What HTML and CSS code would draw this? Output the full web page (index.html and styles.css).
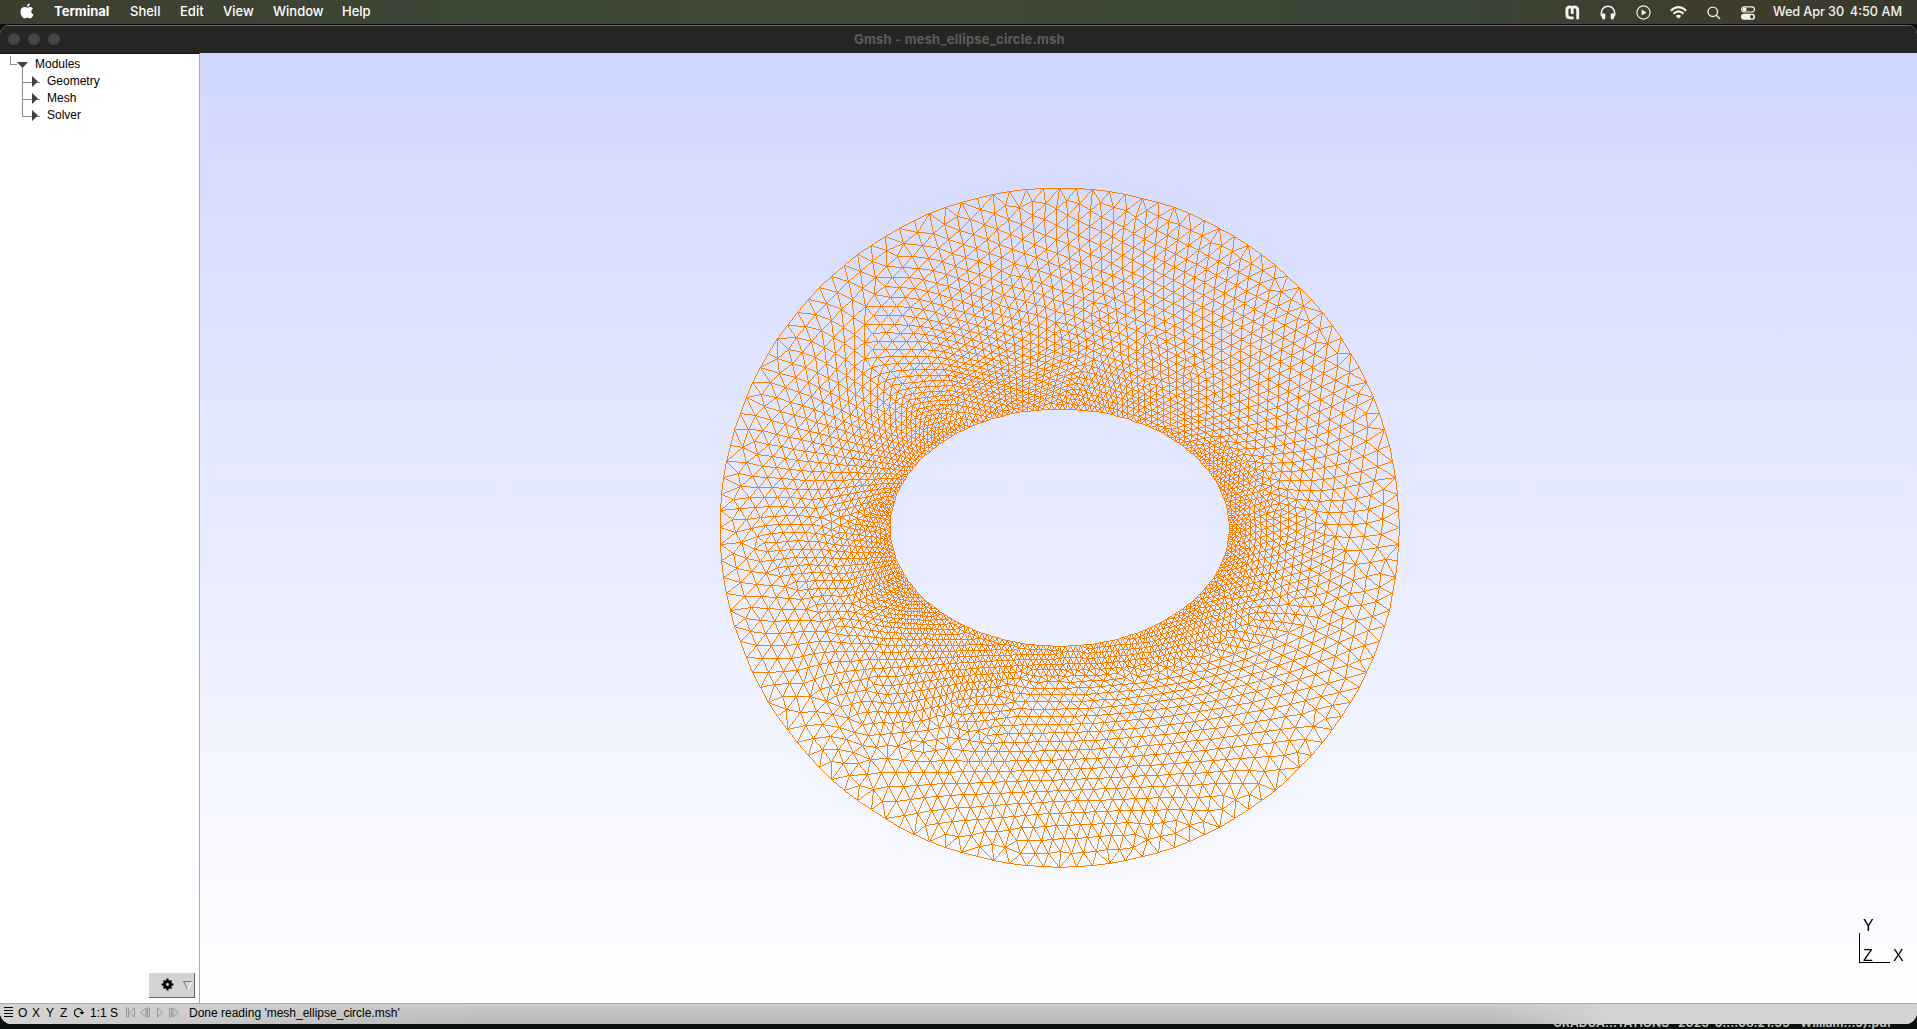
FILE: index.html
```html
<!DOCTYPE html>
<html lang="en">
<head>
<meta charset="utf-8">
<title>Gmsh - mesh_ellipse_circle.msh</title>
<link rel="stylesheet" href="styles.css">
</head>
<body>
<header class="menubar">
  <svg class="apple" viewBox="0 0 14 17" width="14" height="17"><path d="M9.900 0.400c.1 1.700-1.300 3.300-3 3.300C6.700 2.100 8.200.6 9.900.4zM7.100 4.700c.7 0 1.600-.8 3-.8 1.200 0 2.300.6 2.900 1.600-2.500 1.500-2.100 4.900.5 5.900-.6 1.700-2 4-3.400 4-1.100 0-1.500-.7-2.800-.7s-1.800.7-2.800.7C2.700 15.400.5 12 .5 8.700.5 5.600 2.500 4 4.300 4c1.200 0 2.100.7 2.800.7z" fill="#fff"/></svg>
  <nav class="menus"><b class="m1">Terminal</b><span class="m2">Shell</span><span class="m3">Edit</span><span class="m4">View</span><span class="m5">Window</span><span class="m6">Help</span></nav>
  <div class="status-icons">
    <svg width="15" height="15" viewBox="0 0 15 15" fill="none" stroke="#f1f1ee" stroke-width="2.900"><path d="M7.200 9V3.500Q7 1.900 5 1.900Q1.900 1.900 1.900 5V9.500Q1.900 12.900 5.200 12.900H8.600M7.200 4Q7.200 1.900 9.300 1.900Q12.700 1.900 12.700 5V14.200"/></svg>
    <svg width="16" height="16" viewBox="0 0 16 16"><path d="M1.700 11.500C.2 6 3 1.300 8 1.300s7.800 4.700 6.300 10.200" fill="none" stroke="#f1f1ee" stroke-width="1.500"/><rect x="2" y="8.300" width="3.300" height="6.200" rx="1.400" fill="#f1f1ee"/><rect x="10.700" y="8.300" width="3.300" height="6.200" rx="1.400" fill="#f1f1ee"/></svg>
    <svg width="15" height="15" viewBox="0 0 15 15"><circle cx="7.500" cy="7.500" r="6.600" fill="none" stroke="#f1f1ee" stroke-width="1.200"/><path d="M5.600 4.500v6l5-3z" fill="#f1f1ee"/></svg>
    <svg width="17" height="13" viewBox="0 0 17 13" fill="none" stroke="#f1f1ee" stroke-width="2.200"><path d="M.8 4.700Q8.500-2.300 16.200 4.700M3.500 7.700Q8.500 3.200 13.500 7.700"/><path d="M5.800 9.900Q8.500 7.800 11.200 9.900L8.500 12.700z" fill="#f1f1ee" stroke="none"/></svg>
    <svg width="14" height="14" viewBox="0 0 14 14" fill="none" stroke="#f1f1ee" stroke-width="1.400"><circle cx="5.800" cy="5.800" r="4.700"/><path d="M9.300 9.300L13 13"/></svg>
    <svg width="14" height="14" viewBox="0 0 14 14"><rect x=".6" y=".8" width="12.800" height="5.200" rx="2.600" fill="none" stroke="#f1f1ee" stroke-width="1.200"/><circle cx="3.600" cy="3.400" r="2" fill="#f1f1ee"/><rect x="0" y="7.700" width="14" height="6" rx="3" fill="#f1f1ee"/><circle cx="10.700" cy="10.700" r="1.700" fill="#3a3b2e"/></svg>
  </div>
  <div class="clock"><span class="date">Wed Apr 30</span><span class="time">4:50 AM</span></div>
</header>
<main class="window">
  <div class="titlebar"><div class="lights"><i></i><i></i><i></i></div><span class="title">Gmsh - mesh_ellipse_circle.msh</span></div>
  <div class="work">
    <aside class="sidebar">
      <div class="tree">
        <svg class="lines" width="60" height="70" viewBox="0 0 60 70"><g fill="none" stroke="#8b8b8b" shape-rendering="crispEdges"><path d="M10.500 2v8.500H17M22.500 14v48.500H33M23 28.500H40M23 45.500H40M33 62.500H40"/></g><path d="M17 8H28L22.500 14z M32 22v11l6-5.500z M32 39v11l6-5.500z M32 56v11l6-5.500z" fill="#404040"/></svg>
        <ul><li class="root">Modules</li><li>Geometry</li><li>Mesh</li><li>Solver</li></ul>
      </div>
      <div class="gear">
        <svg width="46" height="25" viewBox="0 0 46 25"><g fill="#000" transform="translate(18.500 11.500)"><circle r="4.500"/><path d="M-1-6H1V6H-1z M-6-1H6V1H-6z M-4.600-3.400L-3.400-4.600L4.600 3.400L3.400 4.600z M4.600-3.400L3.400-4.600L-4.600 3.400L-3.400 4.600z"/><circle r="1.400" fill="#d3d3d3"/></g><path d="M34.500 8.500H43M34.500 8.500L38.500 16.500" stroke="#777" fill="none"/><path d="M43 8.500L38.500 16.500" stroke="#fff"/></svg>
      </div>
    </aside>
    <section class="view">
      <canvas id="mesh" width="1717" height="950"></canvas>
      <svg class="axes" width="48" height="48" viewBox="0 0 48 48"><path d="M2.500 15V44.500H33" fill="none" stroke="#000" shape-rendering="crispEdges"/><text x="6" y="12.500">Y</text><text x="6" y="42.500">Z</text><text x="36" y="42.500">X</text></svg>
    </section>
  </div>
  <footer class="statusbar">
    <svg class="list" width="10" height="11" viewBox="0 0 10 11"><path d="M0 .5H9M0 3.500H9M0 6.500H9M0 9.500H9" stroke="#000" shape-rendering="crispEdges"/></svg>
    <span class="b">O</span><span class="b">X</span><span class="b">Y</span><span class="b">Z</span>
    <svg class="rot" width="10" height="11" viewBox="0 0 10 11"><path d="M5.500 9.500A4 4 0 1 1 8.300 5" fill="none" stroke="#000" stroke-width="1.100"/><path d="M5.500 5H10V6L7.500 7.500z"/></svg>
    <span class="one">1:1</span><span class="s">S</span>
    <svg class="play" width="54" height="11" viewBox="0 0 54 11" fill="none" stroke="#969696"><path d="M.5 1V10H2.500V1zM8.500 1L3.500 5.500L8.500 10zM20 1L14.500 5.500L20 10zM21.500 1V10H23.500V1zM31.500 1V10L36.500 5.500zM43.500 1V10H45.500V1zM47 1V10L52.500 5.500z"/></svg>
    <span class="msg">Done reading 'mesh_ellipse_circle.msh'</span>
  </footer>
</main>
<div class="desktop"><span class="d1">GRADUA...TATIONS</span><span class="d2">2025-0....08.21.55</span><span class="d3">William...9).pdf</span></div>
<script src="mesh.js"></script>
</body>
</html>
```
FILE: styles.css
```css
* { box-sizing: border-box; }
body { margin: 0; width: 1917px; height: 1029px; overflow: hidden; background: #0b100d; font-family: "Liberation Sans", sans-serif; display: flex; flex-direction: column; }
.menubar { flex: none; height: 24px; display: flex; align-items: center; padding: 0 0 1px 20px; background: linear-gradient(90deg, #3d3e30, #3c4736 25%, #414a35 45%, #394535 75%, #403d2d 90%, #39382c); color: #fff; font: 500 13px Inter, sans-serif; }
.apple { flex: none; margin-top: -1px; }
.menus { display: flex; padding-left: 20px; width: 1534px; white-space: nowrap; }
.menus b, .menus span { line-height: 23px; }
.m1 { width: 76px; font-weight: 700; }
.m2 { width: 50px; }
.m3 { width: 43px; }
.m4 { width: 50px; }
.m5 { width: 69px; }
.status-icons { display: flex; align-items: center; justify-content: space-between; width: 190px; flex: none; margin: 2px 0 0 -3px; }
.clock { display: flex; justify-content: space-between; width: 129px; margin-left: 18px; white-space: nowrap; color: #f3f3f0; font-size: 12.700px; flex: none; }
.date { letter-spacing: -.1px; }
.window { flex: none; height: 999px; border-radius: 9px 9px 12px 12px; overflow: hidden; display: flex; flex-direction: column; background: #fff; margin-top: 1px; }
.titlebar { flex: none; height: 28px; background: #262523; border-top: 1px solid #666564; display: flex; align-items: center; padding-bottom: 1px; }
.lights { display: flex; gap: 8px; padding-left: 8px; width: 854px; }
.lights i { width: 12px; height: 12px; border-radius: 50%; background: #454443; }
.title { color: #5e5d5c; font: 700 13px Inter, sans-serif; letter-spacing: .2px; padding-bottom: 1px; }
.work { flex: 1; display: flex; min-height: 0; }
.sidebar { width: 200px; border-right: 1px solid #a8a8a8; display: flex; flex-direction: column; justify-content: space-between; border-top: 1px solid #111; }
.tree { display: grid; }
.tree > * { grid-area: 1 / 1; }
.tree ul { list-style: none; margin: 0; padding: 2px 0 0 47px; font-size: 12px; line-height: 17px; }
.tree .root { margin-left: -12px; }
.gear { width: 46px; height: 25px; background: #d3d3d3; align-self: flex-end; margin: 0 4px 5px 0; border-right: 1px solid #666; border-bottom: 1px solid #666; }
.view { flex: 1; display: grid; background: linear-gradient(#d0d7ff, #fff); overflow: hidden; }
.view > * { grid-area: 1 / 1; }
.axes { align-self: end; justify-self: end; margin: 0 12px 37px 0; font: 16px "Liberation Sans", sans-serif; }
.statusbar { flex: none; height: 21px; border-top: 1px solid #aaa; display: flex; align-items: center; padding: 0 0 3px 4px; font-size: 12px; background: linear-gradient(90deg, #d3d3d3, rgba(211,211,211,0) 25%, rgba(211,211,211,0) 78%, #d3d3d3 84%), linear-gradient(#cbcbcb, #b8b8b8); white-space: nowrap; }
.list { margin-right: 4px; }
.b { width: 14px; }
.rot { margin-right: 6px; }
.one { width: 20px; }
.s { width: 16px; }
.play { margin-right: 9px; }
.desktop { flex: none; height: 5px; overflow: hidden; display: flex; padding-left: 1553px; color: #bbb; font: 700 12px/12px Inter, sans-serif; white-space: nowrap; }
.desktop span { margin-top: -7px; }
.d1 { width: 125px; }
.d2 { width: 122px; }
```
FILE: mesh.js
```js
// Triangulates the ring between an ellipse and a circle, then rasterises its edges.
const CX = 859.7, CY = 474.6, R = 339.5, RX = 169.6, RY = 118.5;
const H_OUT = 16.4, N_IN = 200, N_OUT = 128;
let seed = 7;
const rnd = () => (seed = (seed * 16807) % 2147483647) / 2147483647;

// Lattice orientation in degrees, by polar angle (45 degree steps, clockwise from +x).
const TILT = [-20, -6, -2, 0, 10, 14, 20, 30, 40];
function tilt(x, y) {
  const a = ((Math.atan2(y, x) / (Math.PI / 4)) + 8) % 8;
  const i = Math.floor(a), f = a - i;
  return (TILT[i] * (1 - f) + TILT[i + 1] * f) * Math.PI / 180;
}

const pts = [];
for (let i = 0; i < N_OUT; i++) {
  const a = i * 2 * Math.PI / N_OUT;
  pts.push({ x: R * Math.cos(a), y: R * Math.sin(a), fix: 1 });
}
for (let i = 0; i < N_IN; i++) {
  const a = i * 2 * Math.PI / N_IN;
  pts.push({ x: RX * Math.cos(a), y: RY * Math.sin(a), fix: 2 });
}

function innerDist(x, y) {
  const k = Math.hypot(x / RX, y / RY);
  const g = Math.hypot(x / (RX * RX), y / (RY * RY)) / k;
  return (k - 1) / g;
}
function size(x, y) {
  const r = Math.hypot(x, y);
  const c = x / r, s = y / r;
  const e = 1 / Math.hypot(c / RX, s / RY);
  const inner = Math.hypot(RX * s * e / RY, RY * c * e / RX) * 2 * Math.PI / N_IN;
  const f = Math.max(0, Math.min(1, (r - e) / (R - e)));
  return inner + (H_OUT - inner) * f;
}

// The lattice grows from one interior seed: every point proposes six neighbours.
const cell = 8, grid = new Map();
const key = (x, y) => Math.floor(x / cell) * 1000 + Math.floor(y / cell);
function store(p) {
  const k = key(p.x, p.y);
  if (!grid.has(k)) grid.set(k, []);
  grid.get(k).push(p);
}
function free(x, y, r) {
  const n = Math.ceil(r / cell);
  for (let i = -n; i <= n; i++) for (let j = -n; j <= n; j++) {
    const c = grid.get(key(x + i * cell, y + j * cell));
    if (c) for (const q of c) if (Math.hypot(q.x - x, q.y - y) < r) return false;
  }
  return true;
}
const boundary = pts.length;
pts.push({ x: -270, y: -90, fix: 0 });
pts.forEach(store);
function grow(p) {
  const t = tilt(p.x, p.y);
  for (let k = 0; k < 6; k++) {
    const a = t + k * Math.PI / 3;
    let h = size(p.x, p.y);
    h = size(p.x + Math.cos(a) * h / 2, p.y + Math.sin(a) * h / 2);
    const x = p.x + Math.cos(a) * h, y = p.y + Math.sin(a) * h;
    if (Math.hypot(x, y) > R - h * .55 || innerDist(x, y) < h * .55) continue;
    if (!free(x, y, h * .72)) continue;
    const q = { x, y, fix: 0 };
    pts.push(q);
    store(q);
  }
}
for (let i = boundary; i < pts.length; i++) grow(pts[i]);
for (let i = 0; i < boundary; i++) grow(pts[i]);

function delaunay(P) {
  const n = P.length;
  const X = P.map(p => p.x + rnd() * 1e-4), Y = P.map(p => p.y + rnd() * 1e-4);
  X.push(-9000, 9000, 0);
  Y.push(-9000, -9000, 9000);
  const order = P.map((_, i) => i).sort((a, b) => X[a] - X[b]);
  const circ = (a, b, c) => {
    const bx = X[b] - X[a], by = Y[b] - Y[a], cx = X[c] - X[a], cy = Y[c] - Y[a];
    const d = 2 * (bx * cy - by * cx), B = bx * bx + by * by, C = cx * cx + cy * cy;
    const ux = (cy * B - by * C) / d, uy = (bx * C - cx * B) / d;
    return { a, b, c, x: X[a] + ux, y: Y[a] + uy, r: ux * ux + uy * uy };
  };
  let open = [circ(n, n + 1, n + 2)];
  const done = [];
  for (const i of order) {
    const edges = new Map(), keep = [];
    const add = (a, b) => {
      const k = Math.min(a, b) * 100000 + Math.max(a, b);
      if (edges.has(k)) edges.delete(k); else edges.set(k, [a, b]);
    };
    for (const t of open) {
      const dx = X[i] - t.x, dy = Y[i] - t.y;
      if (dx > 0 && dx * dx > t.r) { done.push(t); continue; }
      if (dx * dx + dy * dy < t.r) { add(t.a, t.b); add(t.b, t.c); add(t.c, t.a); } else keep.push(t);
    }
    for (const [a, b] of edges.values()) keep.push(circ(a, b, i));
    open = keep;
  }
  return done.concat(open).filter(t => {
    if (t.a >= n || t.b >= n || t.c >= n) return false;
    return !(P[t.a].fix === 2 && P[t.b].fix === 2 && P[t.c].fix === 2);
  });
}

function edgesOf(tris) {
  const s = new Map();
  for (const t of tris) for (const [a, b] of [[t.a, t.b], [t.b, t.c], [t.c, t.a]])
    s.set(Math.min(a, b) * 100000 + Math.max(a, b), [a, b]);
  return [...s.values()];
}

let edges = edgesOf(delaunay(pts));
for (let it = 0; it < 6; it++) {
  const acc = pts.map(() => [0, 0]);
  for (const [a, b] of edges) for (const [u, v] of [[a, b], [b, a]]) {
    const h = size((pts[u].x + pts[v].x) / 2, (pts[u].y + pts[v].y) / 2);
    const dx = pts[u].x - pts[v].x, dy = pts[u].y - pts[v].y, d = Math.hypot(dx, dy);
    acc[u][0] += dx / d * (h - d);
    acc[u][1] += dy / d * (h - d);
  }
  pts.forEach((p, i) => {
    if (!p.fix) { p.x += acc[i][0] * .17; p.y += acc[i][1] * .17; }
  });
  edges = edgesOf(delaunay(pts));
}

const canvas = document.getElementById("mesh");
const ctx = canvas.getContext("2d");
ctx.fillStyle = "#ff8000";
function line(a, b) {
  let x = Math.floor(CX + a.x), y = Math.floor(CY + a.y);
  const x1 = Math.floor(CX + b.x), y1 = Math.floor(CY + b.y);
  const dx = Math.abs(x1 - x), dy = -Math.abs(y1 - y), sx = x < x1 ? 1 : -1, sy = y < y1 ? 1 : -1;
  let e = dx + dy;
  for (;;) {
    ctx.fillRect(x, y, 1, 1);
    if (x === x1 && y === y1) break;
    const e2 = 2 * e;
    if (e2 >= dy) { e += dy; x += sx; }
    if (e2 <= dx) { e += dx; y += sy; }
  }
}
for (const [a, b] of edges) line(pts[a], pts[b]);
```
